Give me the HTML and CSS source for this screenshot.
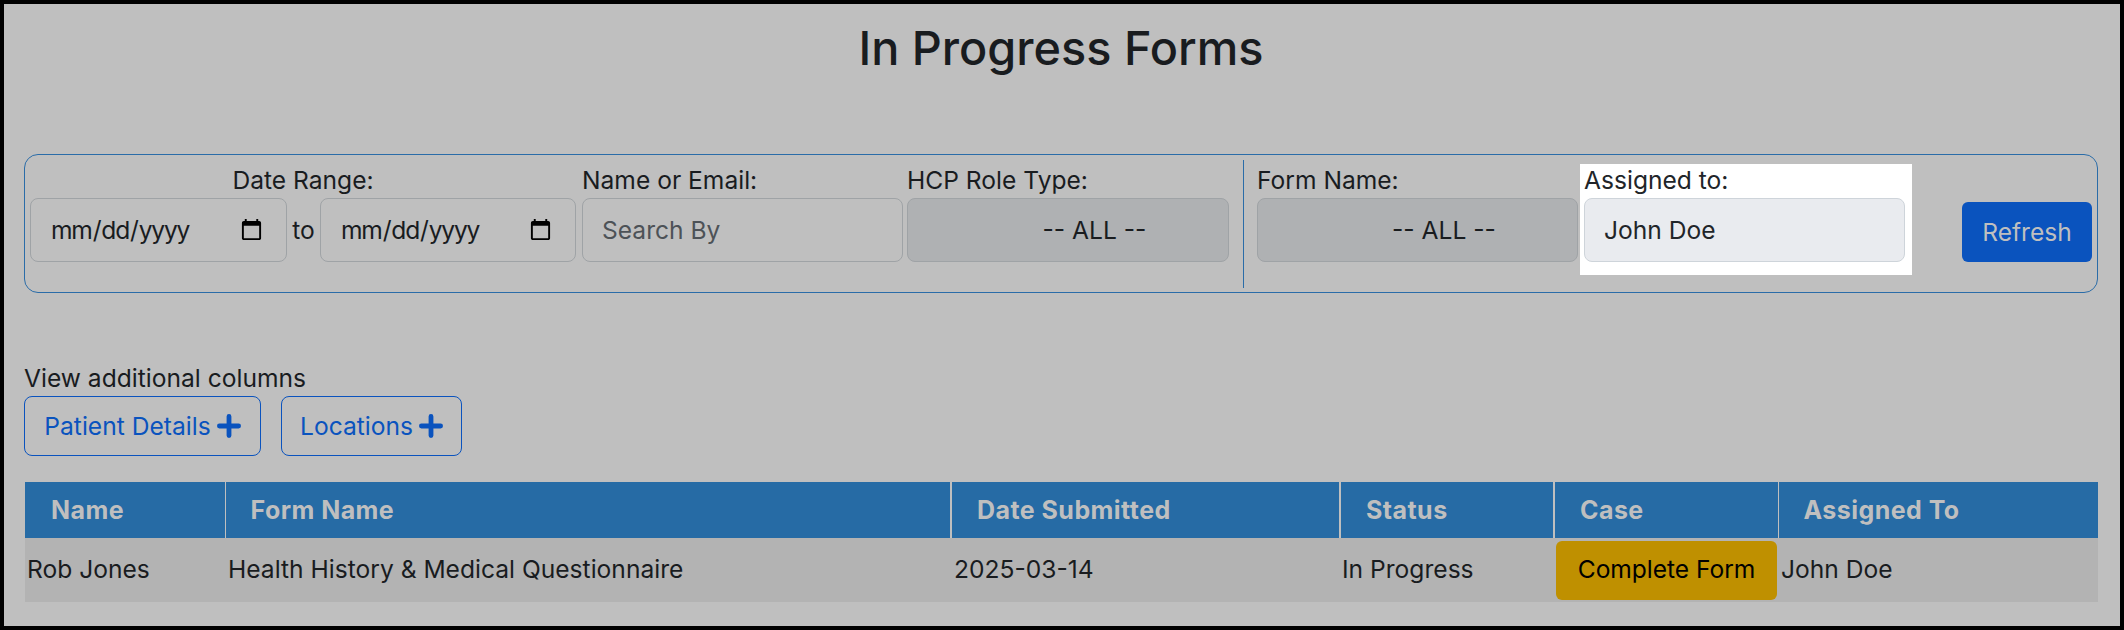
FILE: index.html
```html
<!DOCTYPE html>
<html lang="en">
<head>
<meta charset="utf-8">
<title>In Progress Forms</title>
<link rel="stylesheet" href="styles.css">
</head>
<body>
<main class="page">
  <h1 class="title">In Progress Forms</h1>

  <form class="filters">
    <div class="field date-range">
      <label class="label label-center">Date Range:</label>
      <div class="date-row">
        <input class="control date" type="date">
        <span class="to">to</span>
        <input class="control date date-second" type="date">
      </div>
    </div>
    <div class="field name-field">
      <label class="label">Name or Email:</label>
      <input class="control text" type="text" placeholder="Search By">
    </div>
    <div class="field role-field">
      <label class="label">HCP Role Type:</label>
      <select class="control select" disabled><option>-- ALL --</option></select>
    </div>
    <div class="divider"></div>
    <div class="field form-field">
      <label class="label">Form Name:</label>
      <select class="control select" disabled><option>-- ALL --</option></select>
    </div>
    <div class="field spotlight">
      <label class="label">Assigned to:</label>
      <input class="control assigned" type="text" value="John Doe" disabled>
    </div>
    <button class="refresh" type="button">Refresh</button>
  </form>

  <p class="columns-label">View additional columns</p>
  <div class="column-buttons">
    <button class="outline outline-patient" type="button">Patient Details
      <svg class="plus" viewBox="0 0 20 20" aria-hidden="true"><path d="M10 2v16M2 10h16"/></svg>
    </button>
    <button class="outline" type="button">Locations
      <svg class="plus" viewBox="0 0 20 20" aria-hidden="true"><path d="M10 2v16M2 10h16"/></svg>
    </button>
  </div>

  <table class="forms">
    <colgroup>
      <col class="c1"><col class="c2"><col class="c3"><col class="c4"><col class="c5"><col class="c6">
    </colgroup>
    <thead>
      <tr>
        <th>Name</th><th>Form Name</th><th>Date Submitted</th><th>Status</th><th>Case</th><th>Assigned To</th>
      </tr>
    </thead>
    <tbody>
      <tr>
        <td class="tight">Rob Jones</td>
        <td>Health History &amp; Medical Questionnaire</td>
        <td>2025-03-14</td>
        <td class="tight">In Progress</td>
        <td class="case-cell"><button class="complete" type="button">Complete Form</button></td>
        <td>John Doe</td>
      </tr>
    </tbody>
  </table>
</main>
</body>
</html>
```

FILE: styles.css
```css
* { box-sizing: border-box; }

html, body { margin: 0; padding: 0; }

body {
  font-family: Inter, "Liberation Sans", sans-serif;
  font-size: 24.6px;
  line-height: 36px;
  color: #191c1f;
  background: #bfbfbf;
}

.page {
  height: 630px;
  overflow: hidden;
  border: 4px solid #000;
  padding: 0 22px 0 20px;
}

.title {
  margin: 0;
  padding-top: 15px;
  height: 150px;
  font-size: 46.8px;
  line-height: 58px;
  font-weight: 500;
  text-align: center;
  color: #191c1f;
}

.filters {
  display: flex;
  align-items: flex-start;
  height: 139px;
  padding: 9px 0 0 5px;
  border: 1px solid #2a6ca8;
  border-radius: 14px;
}

.field { display: flex; flex-direction: column; }

.label {
  display: block;
  height: 34px;
  line-height: 32px;
}

.label-center { text-align: center; }

.date-row { display: flex; align-items: center; }

.control {
  display: block;
  height: 64px;
  margin: 0;
  padding: 0 19px;
  font: inherit;
  color: #191c1f;
  background: transparent;
  border: 1px solid #9fa3a6;
  border-radius: 8px;
  outline: none;
}

.date { width: 257px; padding-right: 20px; }

.date::-webkit-datetime-edit { letter-spacing: -1.2px; }

.to { width: 33px; text-align: center; }

.date-second { width: 256px; }

.name-field { width: 321px; margin-left: 6px; }

.text { width: 100%; }

.text::placeholder { color: #4d5257; opacity: 1; }

.role-field { width: 322px; margin-left: 4px; }

.select {
  width: 100%;
  padding-left: 72px;
  text-align: center;
  appearance: none;
  background: #afb1b3;
  opacity: 1;
}

.divider {
  align-self: stretch;
  width: 1px;
  margin: -4px 13px 4px 14px;
  background: #2a6ca8;
}

.form-field { width: 321px; }

.spotlight {
  width: 332px;
  margin-left: 2px;
  padding: 0 7px 13px 4px;
  color: #212529;
  background: #fff;
}

.assigned {
  width: 321px;
  color: #212529;
  background: #e9ebef;
  border-color: #ced4da;
  opacity: 1;
}

.refresh {
  width: 130px;
  height: 60px;
  margin: 38px 0 0 50px;
  padding: 0;
  font: inherit;
  color: #bfbfbf;
  background: #0a53be;
  border: 0;
  border-radius: 6px;
}

.columns-label {
  margin: 67px 0 0;
  height: 36px;
}

.column-buttons { display: flex; gap: 20px; }

.outline {
  display: flex;
  align-items: center;
  justify-content: center;
  gap: 6px;
  width: 181px;
  height: 60px;
  padding: 0;
  font: inherit;
  color: #0a53be;
  background: transparent;
  border: 1px solid #0a53be;
  border-radius: 8px;
}

.outline-patient { width: 237px; }

.plus {
  width: 24px;
  height: 24px;
  fill: none;
  stroke: #0a53be;
  stroke-width: 4;
  stroke-linecap: round;
}

.forms {
  width: 2073px;
  margin: 26px 0 0 1px;
  table-layout: fixed;
  border-collapse: collapse;
}

.c1 { width: 200px; }
.c2 { width: 726px; }
.c3 { width: 389px; }
.c4 { width: 214px; }
.c5 { width: 224px; }
.c6 { width: 320px; }

.forms th {
  height: 56px;
  padding: 0 25px;
  text-align: left;
  font-size: 25px;
  font-weight: 700;
  letter-spacing: 0.45px;
  color: #bfbfbf;
  background: #266ba5;
  border-right: 2px solid #bfbfbf;
}

.forms th:first-child { padding-left: 26px; }

.forms th:nth-child(1),
.forms th:nth-child(5) { border-right-width: 1px; }

.forms th:last-child { border-right: 0; }

.forms td {
  height: 64px;
  padding: 0 3px 2px;
  background: #b3b3b3;
}

.forms .tight { padding-left: 2px; }

.forms .case-cell { padding: 0 2px; }

.complete {
  display: block;
  width: 221px;
  height: 59px;
  padding: 0 0 2px;
  font: inherit;
  letter-spacing: -0.05px;
  color: #000;
  background: #bf9000;
  border: 0;
  border-radius: 6px;
}
```
